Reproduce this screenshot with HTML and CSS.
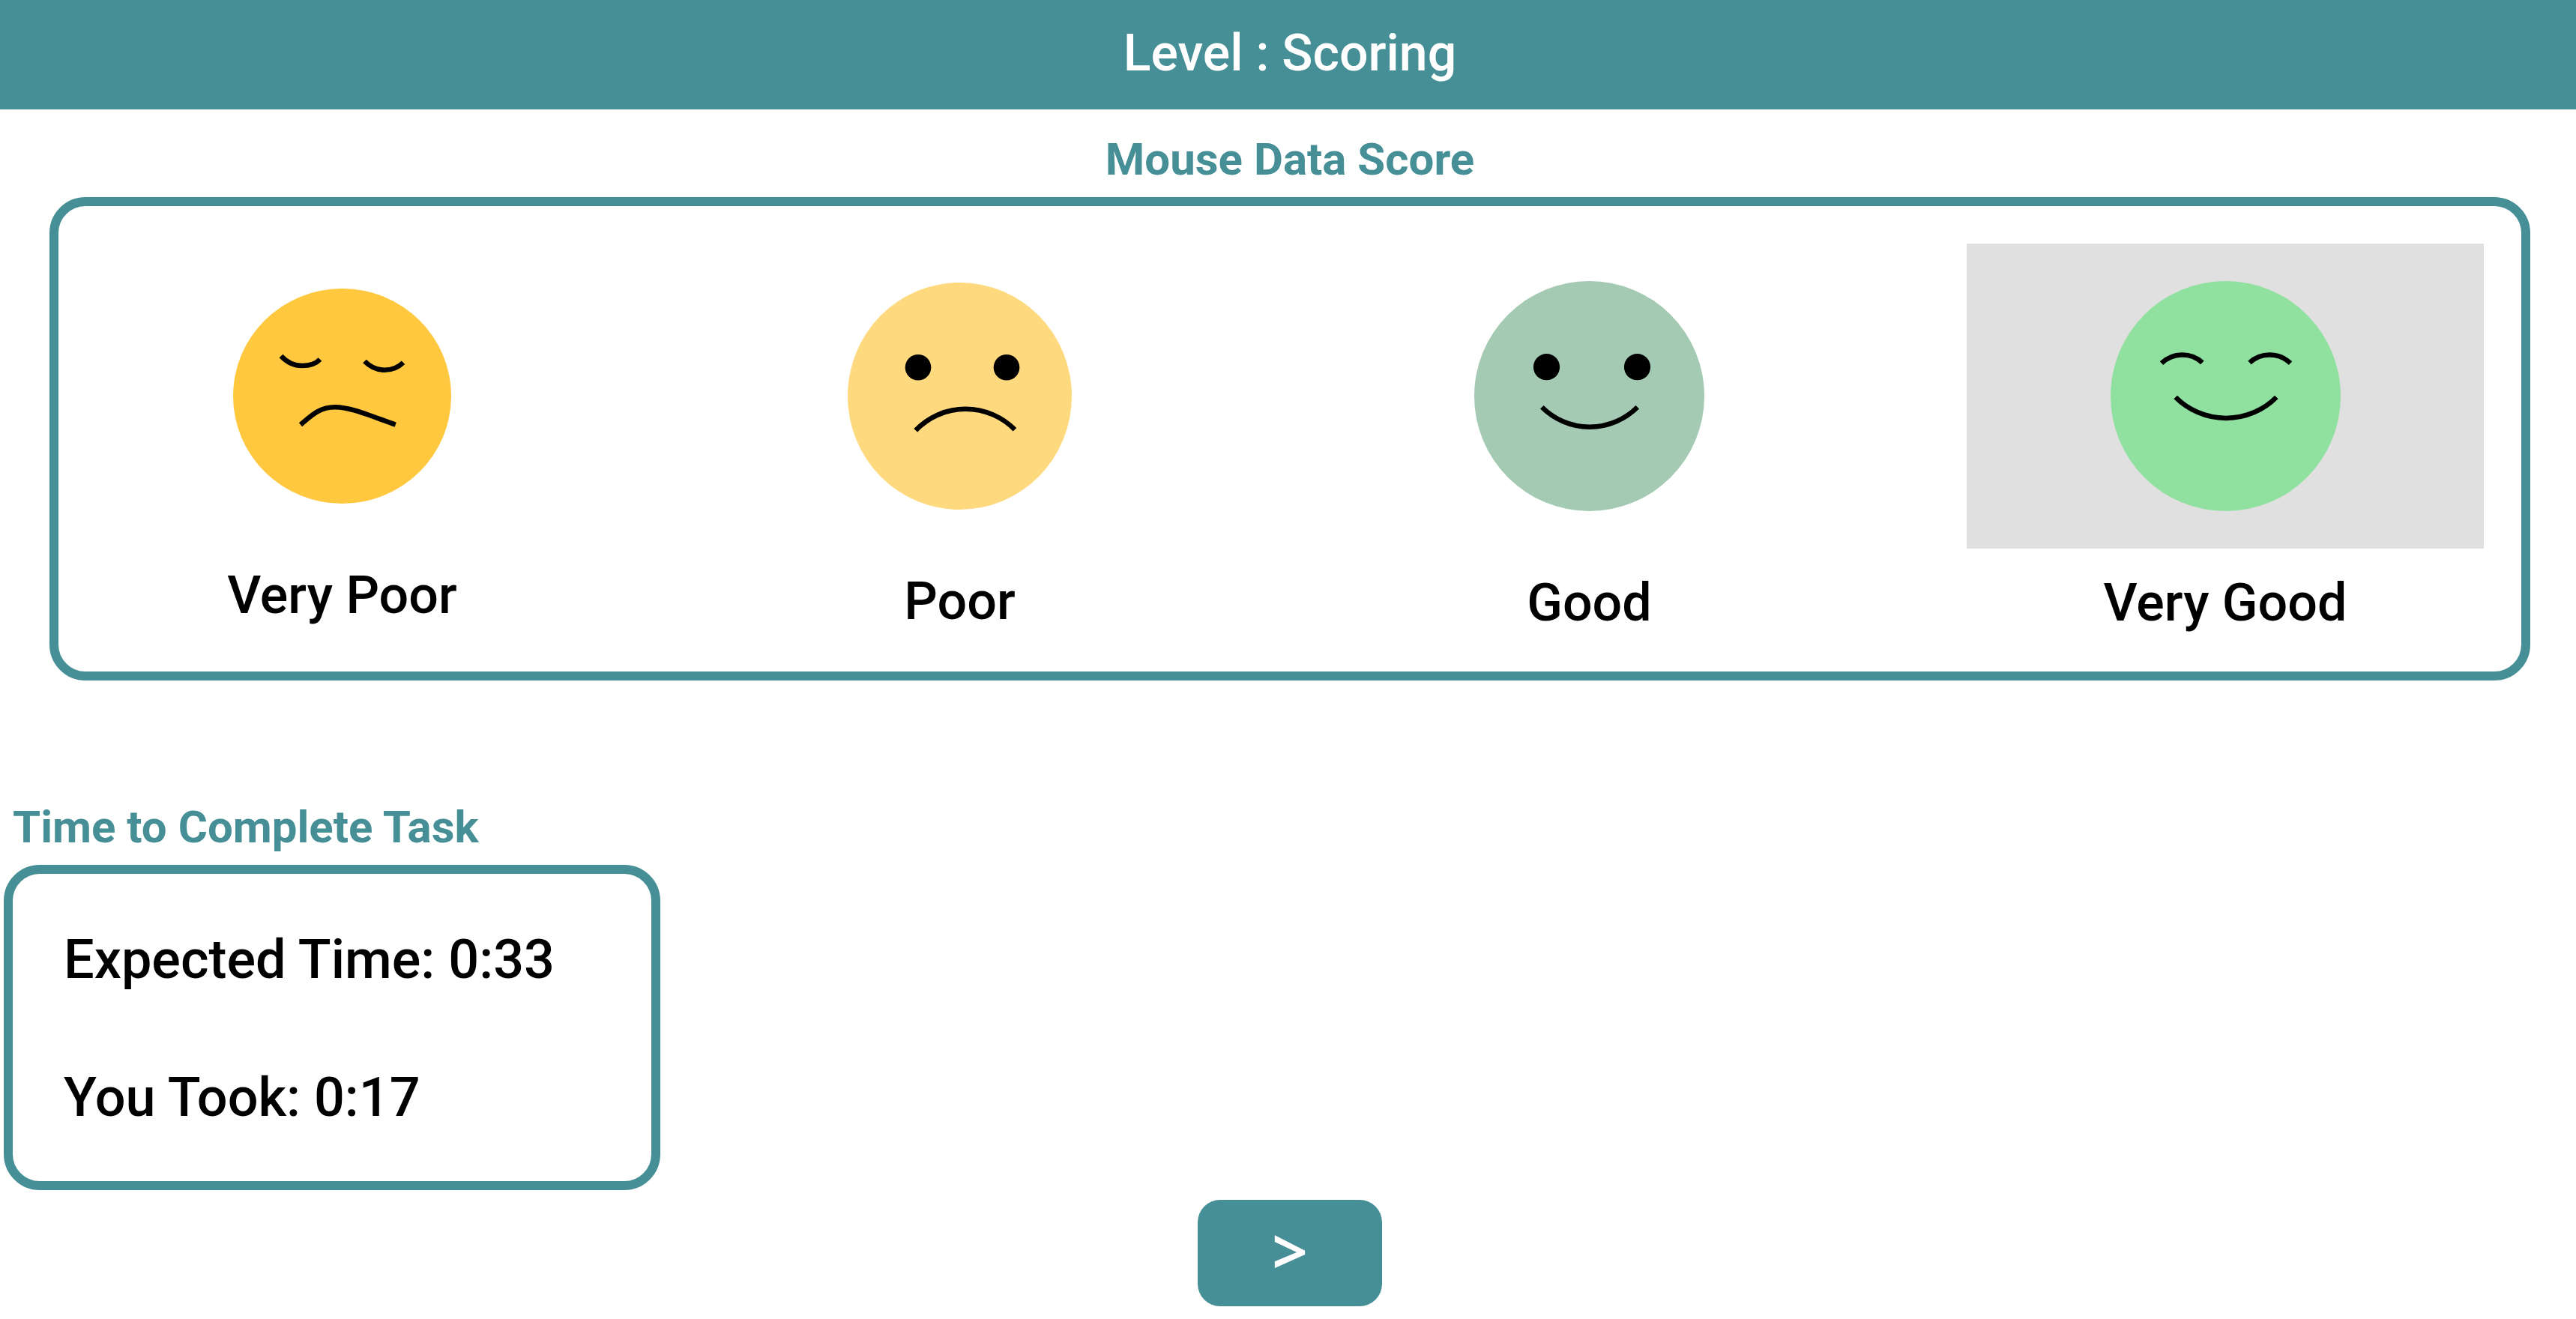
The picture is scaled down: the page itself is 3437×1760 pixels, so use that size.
FILE: index.html
```html
<!DOCTYPE html>
<html lang="en">
<head>
<meta charset="utf-8">
<meta name="viewport" content="width=device-width, initial-scale=1">
<title>Level : Scoring</title>
<link rel="stylesheet" href="styles.css">
</head>
<body>
<header class="topbar">
  <h1 class="topbar-title">Level : Scoring</h1>
</header>
<main class="page">
  <section class="score">
    <h2 class="heading heading-center">Mouse Data Score</h2>
    <div class="panel ratings">
      <figure class="rating">
        <div class="rating-face">
          <svg class="face" width="291" height="287" viewBox="0 0 291 287" aria-hidden="true">
            <ellipse cx="145.5" cy="143.5" rx="145.5" ry="143.5" fill="#ffc83f"/>
            <path class="line" d="M64 90Q76 103 92 103T116 94.500"/>
            <path class="line" d="M175.500 97Q187 108.700 202 108.700T227 98.700"/>
            <path class="line" d="M90 181.700C104 170 115 158.300 136 158.300C156 158.300 178 168 216.700 181.700"/>
          </svg>
        </div>
        <figcaption class="rating-label">Very Poor</figcaption>
      </figure>
      <figure class="rating">
        <div class="rating-face">
          <svg class="face" width="299" height="303" viewBox="0 0 299 303" aria-hidden="true">
            <ellipse cx="149.5" cy="151.5" rx="149.5" ry="151.5" fill="#ffd97d"/>
            <circle cx="94" cy="113.300" r="17.300"/>
            <circle cx="212" cy="113.300" r="17.300"/>
            <path class="line" d="M90.700 197.300A92 92 0 0 1 223 196.300"/>
          </svg>
        </div>
        <figcaption class="rating-label">Poor</figcaption>
      </figure>
      <figure class="rating">
        <div class="rating-face">
          <svg class="face" width="307" height="307" viewBox="0 0 307 307" aria-hidden="true">
            <circle cx="153.5" cy="153.5" r="153.5" fill="#a4cab3"/>
            <circle cx="96.500" cy="114.700" r="17.600"/>
            <circle cx="217.500" cy="114.700" r="17.600"/>
            <path class="line" d="M90.300 168.300A90 90 0 0 0 217.700 168.300"/>
          </svg>
        </div>
        <figcaption class="rating-label">Good</figcaption>
      </figure>
      <figure class="rating rating-selected">
        <div class="rating-face">
          <svg class="face" width="307" height="307" viewBox="0 0 307 307" aria-hidden="true">
            <circle cx="153.5" cy="153.5" r="153.5" fill="#90e0a0"/>
            <path class="line" d="M68 109.700A40 40 0 0 1 122.500 108.900"/>
            <path class="line" d="M185.500 108.900A40 40 0 0 1 240 109.700"/>
            <path class="line" d="M86.700 155A95 95 0 0 0 221.300 155"/>
          </svg>
        </div>
        <figcaption class="rating-label">Very Good</figcaption>
      </figure>
    </div>
  </section>
  <section class="timing">
    <h2 class="heading">Time to Complete Task</h2>
    <div class="panel times">
      <p class="time">Expected Time: 0:33</p>
      <p class="time">You Took: 0:17</p>
    </div>
  </section>
  <div class="actions">
    <button class="next" type="button">&gt;</button>
  </div>
</main>
</body>
</html>
```
FILE: styles.css
```css
:root {
  --teal: #478f96;
}

* {
  box-sizing: border-box;
}

body {
  margin: 0;
  background: #fff;
  color: #000;
  font-family: Roboto, "Noto Sans", sans-serif;
}

h1, h2, p, figure {
  margin: 0;
}

.topbar {
  display: flex;
  align-items: center;
  justify-content: center;
  min-height: 146px;
  padding: 0 0 4px 5px;
  background: var(--teal);
}

.topbar-title {
  color: #fff;
  font-size: 68px;
  font-weight: 500;
  line-height: 84px;
}

.page {
  padding-left: 5px;
}

.heading {
  padding: 25px 12px 8px;
  color: var(--teal);
  font-size: 60px;
  font-weight: 700;
  line-height: 84px;
}

.heading-center {
  text-align: center;
}

.panel {
  border: 12px solid var(--teal);
  border-radius: 48px;
}

.ratings {
  display: grid;
  grid-template-columns: 657fr 673fr 689fr 690fr;
  column-gap: 159px;
  align-items: center;
  margin: 0 61px;
  padding: 50px;
}

.rating-face {
  display: flex;
  justify-content: center;
  padding: 50px 0;
}

.rating-selected .rating-face {
  background: #e0e0e0;
}

.face {
  display: block;
}

.line {
  fill: none;
  stroke: #000;
  stroke-width: 6.5;
}

.rating-label {
  padding-top: 30px;
  text-align: center;
  font-size: 70px;
  font-weight: 500;
  line-height: 84px;
}

.timing {
  margin-top: 129px;
}

.times {
  display: flex;
  flex-direction: column;
  gap: 100px;
  width: 876px;
  max-width: 100%;
  padding: 73px 68px 69px;
}

.time {
  font-size: 72px;
  font-weight: 500;
  line-height: 84px;
}

.actions {
  display: flex;
  justify-content: center;
  padding: 13px 0 17px;
}

.next {
  min-width: 246px;
  height: 142px;
  padding: 0 0 6px;
  border: 0;
  border-radius: 30px;
  background: var(--teal);
  color: #fff;
  font-family: "Noto Sans", sans-serif;
  font-size: 84px;
  font-weight: 600;
  line-height: 84px;
}
```
